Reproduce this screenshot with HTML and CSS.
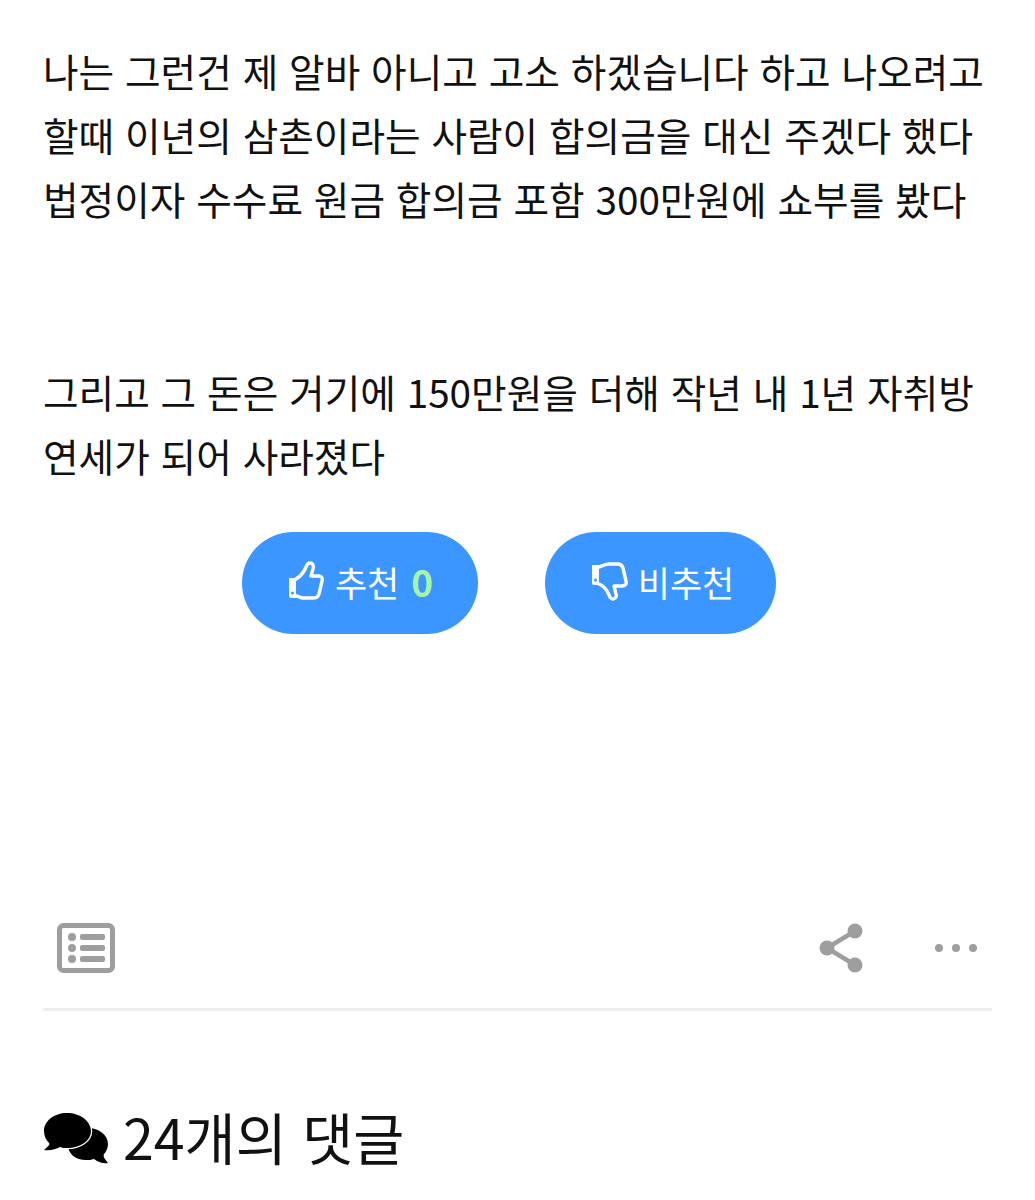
FILE: index.html
```html
<!DOCTYPE html>
<html lang="ko">
<head>
<meta charset="utf-8">
<title>게시글</title>
<link rel="stylesheet" href="styles.css">
</head>
<body>
<main class="page">
  <article class="post">
    <p class="para">나는 그런건 제 알바 아니고 고소 하겠습니다 하고 나오려고<br>할때 이년의 삼촌이라는 사람이 합의금을 대신 주겠다 했다<br>법정이자 수수료 원금 합의금 포함 300만원에 쇼부를 봤다</p>
    <p class="para para-gap">그리고 그 돈은 거기에 150만원을 더해 작년 내 1년 자취방<br>연세가 되어 사라졌다</p>
  </article>
  <div class="votes">
    <button class="vote vote-up">
      <svg class="thumb" viewBox="0 0 38 40" width="38" height="40"><path d="M2 17h7v20H4a2 2 0 0 1-2-2z" fill="#fff"/><circle cx="5.500" cy="32" r="1.500" fill="#3b96ff"/><path d="M9 18c5-3 8-7 10-12 1-3 2-4 4-4 3 0 4 3 3 6l-2 7h8c3 0 4 3 3 5l-3 13c-1 3-2 4-5 4H16c-3 0-4-2-7-2" fill="none" stroke="#fff" stroke-width="3.400" stroke-linejoin="round" stroke-linecap="round"/></svg>
      <span class="vote-label">추천</span><span class="count">0</span>
    </button>
    <button class="vote vote-down">
      <svg class="thumb" viewBox="0 0 38 40" width="38" height="40"><path d="M2 4h7v20H4a2 2 0 0 1-2-2z" fill="#fff"/><circle cx="5.500" cy="19" r="1.500" fill="#3b96ff"/><path d="M9 6c4-1 6-3 10-3h9c3 0 4 1 5 4l3 13c1 3-1 5-4 5h-8l2 8c1 3-1 5-3 5-2 0-3-1-4-4-2-5-5-9-10-11" fill="none" stroke="#fff" stroke-width="3.400" stroke-linejoin="round" stroke-linecap="round"/></svg>
      <span class="vote-label">비추천</span>
    </button>
  </div>
  <div class="tools">
    <svg class="list-icon" viewBox="0 0 58 50" width="58" height="50">
      <rect x="2.500" y="2.500" width="53" height="45" rx="4" fill="none" stroke="#9e9e9e" stroke-width="5"/>
      <circle cx="15" cy="14" r="4" fill="#9e9e9e"/><circle cx="15" cy="25" r="4" fill="#9e9e9e"/><circle cx="15" cy="36" r="4" fill="#9e9e9e"/>
      <rect x="23" y="11" width="25" height="6" rx="2" fill="#9e9e9e"/><rect x="23" y="22" width="25" height="6" rx="2" fill="#9e9e9e"/><rect x="23" y="33" width="25" height="6" rx="2" fill="#9e9e9e"/>
    </svg>
    <div class="tools-right">
      <svg class="share-icon" viewBox="0 0 46 50" width="46" height="50">
        <path d="M8 25 36 8M8 25l28 17" stroke="#9e9e9e" stroke-width="4.500" fill="none"/>
        <circle cx="8" cy="25" r="7.500" fill="#9e9e9e"/><circle cx="36" cy="8" r="7.500" fill="#9e9e9e"/><circle cx="36" cy="42" r="7.500" fill="#9e9e9e"/>
      </svg>
      <svg class="more-icon" viewBox="0 0 44 10" width="44" height="10">
        <circle cx="5" cy="5" r="4" fill="#9e9e9e"/><circle cx="22" cy="5" r="4" fill="#9e9e9e"/><circle cx="39" cy="5" r="4" fill="#9e9e9e"/>
      </svg>
    </div>
  </div>
  <h2 class="comments">
    <svg class="bubbles" viewBox="0 0 66 52" width="66" height="52">
      <path d="M25 33c0-9 9-17 20-17s20 7 20 16c0 4-2 8-4 10-1 2 0 4 4 9-5 1-10-1-14-4-3 1-5 1-8 1-10 0-18-6-18-15z" fill="#000"/>
      <path d="M24 1C11 1 1 9 1 19c0 5 2 9 5 12 1 1 0 3-5 7 6 1 12-1 16-3 2 1 5 1 7 1 13 0 24-7 24-17S37 1 24 1z" fill="#000" stroke="#fff" stroke-width="2.500" paint-order="stroke"/>
    </svg>
    <span class="comments-title">24개의 댓글</span>
  </h2>
</main>
</body>
</html>
```
FILE: styles.css
```css
html, body {
  margin: 0;
  padding: 0;
  background: #fff;
}
.page {
  width: 1035px;
  height: 1200px;
  box-sizing: border-box;
  padding: 38px 43px 0;
  overflow: hidden;
  font-family: "Noto Sans CJK KR", "Noto Sans", sans-serif;
  color: #111;
}
.para {
  margin: 0;
  font-size: 38.7px;
  line-height: 64px;
  white-space: nowrap;
}
.para-gap {
  margin-top: 129px;
}
.votes {
  display: flex;
  gap: 67px;
  padding-left: 199px;
  margin-top: 45px;
}
.vote {
  display: flex;
  align-items: center;
  justify-content: center;
  height: 102px;
  border: 0;
  border-radius: 51px;
  background: #3b96ff;
  color: #fff;
  font-family: inherit;
  font-size: 35px;
  padding: 0 0 4px;
}
.vote-up { width: 236px; }
.vote-down { width: 231px; padding-left: 3px; }
.thumb { margin-right: 10px; }
.count {
  margin-left: 12px;
  color: #a4f5a6;
  font-weight: 700;
  font-size: 37px;
}
.tools {
  display: flex;
  justify-content: space-between;
  align-items: center;
  width: 921px;
  height: 50px;
  margin-top: 289px;
  padding: 0 14px 35px;
  border-bottom: 3px solid #eeeeee;
}
.tools-right {
  display: flex;
  align-items: center;
  gap: 69px;
}
.comments {
  display: flex;
  align-items: center;
  gap: 14px;
  margin: 90px 0 0;
  font-size: 55.5px;
  font-weight: 400;
  line-height: 70px;
  color: #111;
}
.comments-title {
  margin-bottom: 4px;
}
```
